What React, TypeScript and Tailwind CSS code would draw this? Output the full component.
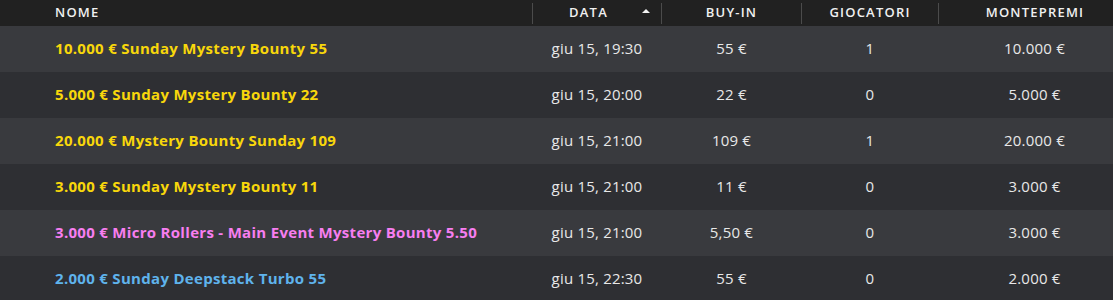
import React from "react";

type Row = { name: string; color: string; date: string; buyin: string; players: string; prize: string };

const rows: Row[] = [
  { name: "10.000 € Sunday Mystery Bounty 55", color: "text-[#f8d70b]", date: "giu 15, 19:30", buyin: "55 €", players: "1", prize: "10.000 €" },
  { name: "5.000 € Sunday Mystery Bounty 22", color: "text-[#f8d70b]", date: "giu 15, 20:00", buyin: "22 €", players: "0", prize: "5.000 €" },
  { name: "20.000 € Mystery Bounty Sunday 109", color: "text-[#f8d70b]", date: "giu 15, 21:00", buyin: "109 €", players: "1", prize: "20.000 €" },
  { name: "3.000 € Sunday Mystery Bounty 11", color: "text-[#f8d70b]", date: "giu 15, 21:00", buyin: "11 €", players: "0", prize: "3.000 €" },
  { name: "3.000 € Micro Rollers - Main Event Mystery Bounty 5.50", color: "text-[#f77ef0]", date: "giu 15, 21:00", buyin: "5,50 €", players: "0", prize: "3.000 €" },
  { name: "2.000 € Sunday Deepstack Turbo 55", color: "text-[#5fb3ec]", date: "giu 15, 22:30", buyin: "55 €", players: "0", prize: "2.000 €" },
];

const font = { fontFamily: "'Open Sans', Lato, sans-serif" };

export default function App() {
  return (
    <div className="w-[1113px] h-[300px] overflow-hidden bg-[#2e2f33]" style={font}>
      <div className="grid grid-cols-[532px_129px_140px_137px_1fr] h-[26px] bg-[#212121] items-center text-[13px] font-semibold tracking-[1.2px] text-[#f0f0f0]">
        <div className="pl-[55px] pb-[1px]">NOME</div>
        <div className="h-[21px] border-l border-[#4b4b4b] flex items-center pb-[1px]">
          <span className="flex-1 text-center pl-[2px]">DATA</span>
          <svg width="8" height="4" viewBox="0 0 8 4" className="mr-[11px] mb-[3px]">
            <path d="M0 4 L4 0 L8 4 Z" fill="#f2f2f2" />
          </svg>
        </div>
        <div className="h-[21px] border-l border-[#4b4b4b] flex items-center justify-center pb-[1px]">BUY-IN</div>
        <div className="h-[21px] border-l border-[#4b4b4b] flex items-center justify-center pb-[1px]">GIOCATORI</div>
        <div className="h-[21px] border-l border-[#4b4b4b] flex items-center justify-center pl-[18px] pb-[1px]">MONTEPREMI</div>
      </div>
      {rows.map((r, i) => (
        <div
          key={i}
          className={`grid grid-cols-[532px_129px_140px_137px_1fr] h-[46px] items-center text-[15px] tracking-[0.2px] text-[#e8e8e8] ${i % 2 === 0 ? "bg-[#393a3e]" : "bg-[#2e2f33]"}`}
        >
          <div className={`pl-[55px] pb-[2px] font-bold tracking-[0.3px] ${r.color}`}>{r.name}</div>
          <div className="text-center pl-[1px] pb-[2px]">{r.date}</div>
          <div className="text-center pl-[1px] pb-[2px]">{r.buyin}</div>
          <div className="text-center pl-[1px] pb-[2px]">{r.players}</div>
          <div className="text-center pl-[18px] pb-[2px]">{r.prize}</div>
        </div>
      ))}
    </div>
  );
}
